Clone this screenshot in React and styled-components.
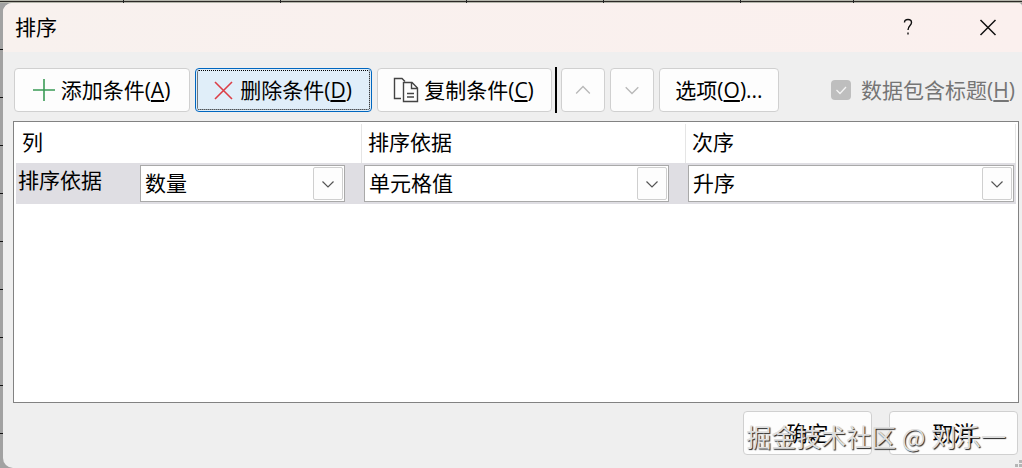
import React from "react";
import styled, { createGlobalStyle, css } from "styled-components";

const GlobalStyle = createGlobalStyle`
  *, *::before, *::after { box-sizing: border-box; }
  body {
    margin: 0;
    color: #000;
    font: 21px/28px "Open Sans", "Noto Sans CJK SC", sans-serif;
  }
  button, select, input { font: inherit; color: inherit; }
`;

const tick = (x) => `linear-gradient(#222, #222) ${x}px 0 / 1px 3px no-repeat`;

const Sheet = styled.div`
  display: flex;
  min-height: 100vh;
  padding: 3px 0 0 3px;
  background:
    ${[123, 280, 466, 603, 740, 853].map(tick).join(", ")},
    linear-gradient(#2c2a26, #2c2a26) 0 1px / 100% 1px no-repeat,
    linear-gradient(#b4b5ab, #b4b5ab) 0 0 / 100% 3px no-repeat,
    repeating-linear-gradient(#a2a2a2 0 47px, #111 47px 48px) 0 2px;
`;

const Dialog = styled.section`
  flex: 1;
  min-width: 0;
  display: flex;
  flex-direction: column;
  background: #efefef;
  border-radius: 9px 4px 0 10px;
  overflow: hidden;
  position: relative;
`;

const TitleBar = styled.header`
  display: flex;
  align-items: center;
  height: 49px;
  padding: 0 14px 2px 12px;
  background: linear-gradient(90deg, #f8f1ee, #fbf0ee);
`;

const Title = styled.h1`
  flex: 1;
  margin: 0;
  font: inherit;
`;

const WindowButton = styled.button`
  display: flex;
  align-items: center;
  justify-content: center;
  width: 40px;
  height: 40px;
  margin-left: 40px;
  padding: 0;
  border: 0;
  background: transparent;
`;

const Toolbar = styled.div`
  display: flex;
  align-items: center;
  gap: 5px;
  padding: 15px 7px 8px 11px;
`;

const Button = styled.button`
  display: flex;
  align-items: center;
  justify-content: center;
  gap: 5px;
  height: 44px;
  width: ${(p) => p.$width}px;
  padding: 0 ${(p) => (p.$icon ? 2 : 0)}px 0 0;
  white-space: nowrap;
  background: #fdfdfd;
  border: 1px solid #d0d0d0;
  border-radius: 4px;
  ${(p) =>
    p.$active &&
    css`
      background: #e0eef9;
      border-color: #0067c0;
      outline: 1px dotted #000;
      outline-offset: -3px;
    `}
`;

const Divider = styled.span`
  width: 2px;
  height: 46px;
  margin: 0 -1px 0 -2px;
  background: #000;
`;

const HeaderToggle = styled.label`
  display: flex;
  align-items: center;
  gap: 10px;
  margin-left: auto;
  color: #757575;
  white-space: nowrap;
`;

const Checkbox = styled.input`
  appearance: none;
  width: 20px;
  height: 20px;
  margin: 0;
  border-radius: 4px;
  background: #bebebe;
`;

const CheckSlot = styled.span`
  display: grid;
  & > * { grid-area: 1 / 1; }
`;

const List = styled.main`
  flex: 1;
  margin: 0 3px 0 10px;
  padding: 2px;
  background: #fff;
  border: 1px solid #828282;
`;

const Table = styled.table`
  width: 100%;
  table-layout: fixed;
  border-collapse: separate;
  border-spacing: 0;
`;

const HeadCell = styled.th`
  width: ${(p) => p.$width};
  height: 39px;
  padding: 0 6px 4px;
  text-align: left;
  font-weight: inherit;
  border-right: 1px solid #e5e5e5;
`;

const RowCell = styled.td`
  height: 41px;
  padding: ${(p) => (p.$last ? "0 2px" : "0 17px 0 2px")};
  background: #dfdee3;
`;

const CellContent = styled.div`
  display: flex;
  align-items: center;
`;

const RowLabel = styled.label`
  width: 122px;
  padding-bottom: 8px;
`;

const SelectFrame = styled.div`
  flex: 1;
  min-width: 0;
  display: grid;
  align-items: center;
  height: 37px;
  background: #fff;
  border: 1px solid #a9a9a9;
  & > * { grid-area: 1 / 1; }
`;

const Select = styled.select`
  appearance: none;
  width: 100%;
  height: 35px;
  padding: 0 34px 2px 4px;
  border: 0;
  background: transparent;
`;

const Arrow = styled.span`
  justify-self: end;
  display: flex;
  align-items: center;
  justify-content: center;
  width: 30px;
  height: 33px;
  margin-right: 1px;
  border: 1px solid #cfcfcf;
  border-radius: 2px;
  background: #fdfdfd;
  pointer-events: none;
`;

const Footer = styled.footer`
  display: flex;
  justify-content: flex-end;
  gap: 17px;
  padding: 8px 4px 13px;
`;

const Watermark = styled.div`
  position: absolute;
  right: 16px;
  bottom: 14px;
  font: 25px/36px "Noto Sans CJK SC", sans-serif;
  color: #dedede;
  text-shadow: 1px 1px 1px #222;
  white-space: nowrap;
  pointer-events: none;
`;

const Grip = styled.svg`
  position: absolute;
  right: 0;
  bottom: 0;
`;

const Chevron = ({ up, size = 14, color = "#555" }) => (
  <svg width={size} height={size} viewBox="0 0 14 14" fill="none" stroke={color} strokeWidth="1.2" aria-hidden="true">
    <path d={up ? "M1 10L7 4L13 10" : "M1.5 4.5L7 10L12.5 4.5"} />
  </svg>
);

const PlusIcon = () => (
  <svg width="24" height="24" viewBox="0 0 24 24" stroke="#3a9b55" strokeWidth="1.6" aria-hidden="true">
    <path d="M12 1V23M1 12H23" />
  </svg>
);

const DeleteIcon = () => (
  <svg width="22" height="22" viewBox="0 0 22 22" stroke="#dc3e46" strokeWidth="1.6" aria-hidden="true">
    <path d="M2 3L19 20M19 3L2 20" />
  </svg>
);

const CopyIcon = () => (
  <svg width="26" height="26" viewBox="0 0 26 26" fill="none" stroke="#444" strokeWidth="1.4" aria-hidden="true">
    <path d="M8 21.5H1.5V1.5H9L12 4.5" />
    <path d="M10.5 5.5H19L24.5 11V24.5H10.5ZM18.5 5.5V11.5H24.5M14 16.5H21M14 20H21" />
  </svg>
);

const columns = [
  { name: "列", width: "346px", value: "数量", rowLabel: "排序依据" },
  { name: "排序依据", width: "324px", value: "单元格值" },
  { name: "次序", width: "auto", value: "升序" },
];

export default function App() {
  return (
    <>
      <GlobalStyle />
      <Sheet>
        <Dialog aria-label="排序">
          <TitleBar>
            <Title>排序</Title>
            <WindowButton aria-label="帮助">
              <svg width="12" height="18" viewBox="0 0 12 18" fill="none" stroke="#111" strokeWidth="1.4">
                <path d="M2.5 4.5C2.5 0.5 9.5 0.5 9.5 4.5C9.5 7.5 6 7.5 6 12M6 14.5V16.5" />
              </svg>
            </WindowButton>
            <WindowButton aria-label="关闭">
              <svg width="18" height="18" viewBox="0 0 18 18" stroke="#111" strokeWidth="1.5">
                <path d="M1.5 2L16.5 17M16.5 2L1.5 17" />
              </svg>
            </WindowButton>
          </TitleBar>

          <Toolbar>
            <Button $width={176} $icon><PlusIcon /><span>添加条件(<u>A</u>)</span></Button>
            <Button $width={177} $icon $active><DeleteIcon /><span>删除条件(<u>D</u>)</span></Button>
            <Button $width={175} $icon><CopyIcon /><span>复制条件(<u>C</u>)</span></Button>
            <Divider />
            <Button $width={44} disabled aria-label="上移"><Chevron up size={16} color="#b9b9b9" /></Button>
            <Button $width={44} disabled aria-label="下移"><Chevron size={16} color="#b9b9b9" /></Button>
            <Button $width={120}><span>选项(<u>O</u>)...</span></Button>
            <HeaderToggle>
              <CheckSlot>
                <Checkbox type="checkbox" defaultChecked disabled />
                <svg width="20" height="20" viewBox="0 0 20 20" fill="none" stroke="#f4f4f4" strokeWidth="1.3" aria-hidden="true">
                  <path d="M5.5 10L9 13.5L15 7" />
                </svg>
              </CheckSlot>
              <span>数据包含标题(<u>H</u>)</span>
            </HeaderToggle>
          </Toolbar>

          <List>
            <Table>
              <thead>
                <tr>
                  {columns.map((c) => <HeadCell key={c.name} $width={c.width}>{c.name}</HeadCell>)}
                </tr>
              </thead>
              <tbody>
                <tr>
                  {columns.map((c, i) => (
                    <RowCell key={c.name} $last={i === columns.length - 1}>
                      <CellContent>
                        {c.rowLabel && <RowLabel htmlFor="field-0">{c.rowLabel}</RowLabel>}
                        <SelectFrame>
                          <Select id={`field-${i}`} aria-label={c.rowLabel ? undefined : c.name}>
                            <option>{c.value}</option>
                          </Select>
                          <Arrow><Chevron /></Arrow>
                        </SelectFrame>
                      </CellContent>
                    </RowCell>
                  ))}
                </tr>
              </tbody>
            </Table>
          </List>

          <Footer>
            <Button $width={129}>确定</Button>
            <Button $width={129}>取消</Button>
          </Footer>
          <Watermark>掘金技术社区 @ 刘乐一</Watermark>
          <Grip width="8" height="8" viewBox="0 0 8 8" fill="#b5b5b5" aria-hidden="true">
            <path d="M5 0H8V3H5ZM1 4H4V7H1ZM5 4H8V7H5Z" />
          </Grip>
        </Dialog>
      </Sheet>
    </>
  );
}
